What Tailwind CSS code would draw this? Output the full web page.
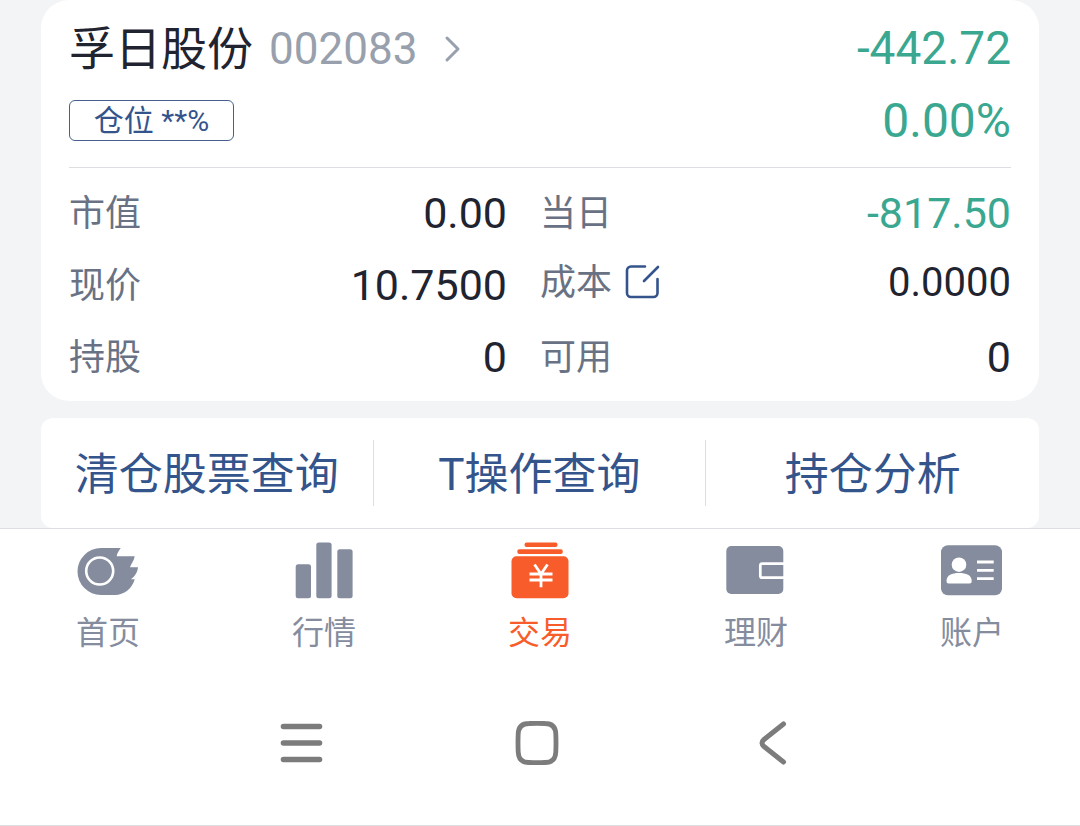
<!DOCTYPE html>
<html lang="zh-CN">
<head>
  <meta charset="UTF-8" />
  <title>持仓</title>
  <meta name="viewport" content="width=device-width, initial-scale=1" />
  <script src="https://cdn.jsdelivr.net/npm/@tailwindcss/browser@4"></script>
</head>
<body class="bg-white font-['Roboto','Noto_Sans_CJK_SC',sans-serif] text-[#1f2430]">

  <main class="bg-[#f3f4f6] px-[41px]">

    <!-- Position card -->
    <section class="bg-white rounded-[28px] px-7 pt-3 pb-2">
      <div class="flex items-center justify-between h-[72px]">
        <a href="#" class="flex items-center pt-0.5">
          <h1 class="text-[46px] leading-none">孚日股份</h1>
          <span class="ml-4 text-[44px] leading-none text-[#989fad]">002083</span>
          <svg class="ml-[22px] w-[24px] h-[32px]" viewBox="0 0 24 32" fill="none" stroke="#989fad" stroke-width="3" stroke-linecap="round" stroke-linejoin="round" aria-hidden="true">
            <path d="M8 5l11 11L8 27" />
          </svg>
        </a>
        <span class="text-[46px] leading-none text-[#3aa790]">-442.72</span>
      </div>
      <div class="flex items-center justify-between h-[72px] mb-[11px]">
        <span class="flex items-center justify-center w-[165px] h-[41px] pt-0.5 border border-[#45608f] rounded-md text-[30px] leading-none text-[#34548c]">仓位 **%</span>
        <span class="pt-0.5 text-[48px] leading-none text-[#3aa790]">0.00%</span>
      </div>

      <dl class="grid grid-cols-2 border-t border-[#dcdee2] pt-[9px] text-[43px] leading-none">
        <div class="flex items-center justify-between h-[72px] pr-[33px]">
          <dt class="pt-0.5 text-[36px] text-[#697284]">市值</dt>
          <dd>0.00</dd>
        </div>
        <div class="flex items-center justify-between h-[72px]">
          <dt class="pt-0.5 text-[36px] text-[#697284]">当日</dt>
          <dd class="text-[#3aa790]">-817.50</dd>
        </div>
        <div class="flex items-center justify-between h-[72px] pr-[33px]">
          <dt class="pt-0.5 text-[36px] text-[#697284]">现价</dt>
          <dd>10.7500</dd>
        </div>
        <div class="flex items-center justify-between h-[72px] pb-1">
          <dt class="flex items-center text-[36px] text-[#697284]">
            成本
            <button type="button" aria-label="修改成本" class="ml-3">
              <svg class="w-[36px] h-[36px]" viewBox="0 0 36 36" fill="none" stroke="#34548c" stroke-width="2.6" stroke-linecap="round" stroke-linejoin="round">
                <path d="M21 1.500H7a4 4 0 0 0-4 4V28a4 4 0 0 0 4 4h22.500a4 4 0 0 0 4-4V14" />
                <path d="M20 16L34 2" />
              </svg>
            </button>
          </dt>
          <dd class="text-[40px]">0.0000</dd>
        </div>
        <div class="flex items-center justify-between h-[72px] pr-[33px]">
          <dt class="pt-0.5 text-[36px] text-[#697284]">持股</dt>
          <dd>0</dd>
        </div>
        <div class="flex items-center justify-between h-[72px]">
          <dt class="pt-0.5 text-[36px] text-[#697284]">可用</dt>
          <dd>0</dd>
        </div>
      </dl>
    </section>

    <!-- Shortcuts -->
    <section class="mt-[17px] grid grid-cols-3 items-center h-[110px] bg-white rounded-xl text-[44px] leading-none text-[#34548c] text-center whitespace-nowrap">
      <a href="#" class="flex items-center justify-center h-[66px] pt-1 border-r border-[#dcdee2]">清仓股票查询</a>
      <a href="#" class="flex items-center justify-center h-[66px] pt-1 border-r border-[#dcdee2]">T操作查询</a>
      <a href="#" class="flex items-center justify-center h-[66px] pt-1">持仓分析</a>
    </section>
  </main>

  <!-- Tab bar -->
  <nav class="grid grid-cols-5 border-t border-[#dcdee2] pt-3 pb-[10px] text-[32px] leading-10 text-[#848c9e]">
    <a href="#" class="flex flex-col items-center gap-3">
      <svg class="w-[64px] h-[60px]" viewBox="0 0 64 60" fill="currentColor" aria-hidden="true">
        <path d="M25 7H44.700C43 10 41 12 40.700 15.300H58.700C58 20 55 23 54 26.300H62C61.500 32 58 36 55 38.300H58.700C56 48 48 54 39 54H25A23.500 23.500 0 0 1 25 7Z" />
        <circle cx="23.700" cy="30" r="13.500" fill="none" stroke="#fff" stroke-width="2.600" />
      </svg>
      首页
    </a>
    <a href="#" class="flex flex-col items-center gap-3">
      <svg class="w-[64px] h-[60px]" viewBox="0 0 64 60" fill="currentColor" aria-hidden="true">
        <rect x="3.700" y="23.300" width="15.300" height="34" rx="2.500" />
        <rect x="24.300" y="1.500" width="15.300" height="55.800" rx="2.500" />
        <rect x="45.300" y="8.300" width="15.300" height="49" rx="2.500" />
      </svg>
      行情
    </a>
    <a href="#" aria-current="page" class="flex flex-col items-center gap-3 text-[#f95c2b]">
      <svg class="w-[64px] h-[60px]" viewBox="0 0 64 60" fill="currentColor" aria-hidden="true">
        <rect x="16.500" y="1.500" width="33" height="4.600" rx="2" />
        <rect x="9.300" y="8.300" width="45.500" height="4.700" rx="2" />
        <rect x="3.500" y="15.300" width="57" height="42" rx="5" />
        <path d="M26.500 23.500L33 33l6.500-9.500M33 33v13.300M21.500 33h23M21.500 39h23" fill="none" stroke="#fff" stroke-width="2.800" />
      </svg>
      交易
    </a>
    <a href="#" class="flex flex-col items-center gap-3">
      <svg class="w-[64px] h-[60px]" viewBox="0 0 64 60" fill="currentColor" aria-hidden="true">
        <rect x="2.300" y="5" width="57" height="48" rx="5" />
        <path d="M60 22.700H38.300a2 2 0 0 0-2 2v10a2 2 0 0 0 2 2H60" fill="none" stroke="#fff" stroke-width="2.700" />
      </svg>
      理财
    </a>
    <a href="#" class="flex flex-col items-center gap-3">
      <svg class="w-[64px] h-[60px]" viewBox="0 0 64 60" fill="currentColor" aria-hidden="true">
        <rect x="1" y="4.300" width="61" height="50" rx="7" />
        <circle cx="19" cy="23.700" r="7.300" fill="#fff" />
        <path d="M6.500 40C6.500 34 12 32 19 32s12.700 2 12.700 8c0 1.700-.700 2.500-2.200 2.500H8.700c-1.500 0-2.200-.800-2.200-2.500Z" fill="#fff" />
        <path d="M37 21h16.700M37 29.300h16.700M37 37.700h16.700" stroke="#fff" stroke-width="2.800" />
      </svg>
      账户
    </a>
  </nav>

  <!-- System navigation -->
  <footer class="flex justify-center gap-[188px] border-b border-[#dcdee2] pt-[58px] pb-[60px] pr-[6px] text-[#7c7c7c]">
    <button type="button" aria-label="最近任务">
      <svg class="w-[48px] h-[44px]" viewBox="0 0 48 44" fill="none" stroke="currentColor" stroke-width="5.600" stroke-linecap="round">
        <path d="M6.500 5.500h36M6.500 22h36M6.500 38.500h36" />
      </svg>
    </button>
    <button type="button" aria-label="主屏幕">
      <svg class="w-[48px] h-[44px]" viewBox="0 0 48 44" fill="none" stroke="currentColor" stroke-width="4.800">
        <path d="M16 2.500Q24 2 32 2.500Q42.500 2.500 42.800 13Q43.200 22 42.800 31Q42.500 41.500 32 41.500Q24 42 16 41.500Q5.500 41.500 5.200 31Q4.800 22 5.200 13Q5.500 2.500 16 2.500Z" />
      </svg>
    </button>
    <button type="button" aria-label="返回">
      <svg class="w-[48px] h-[44px]" viewBox="0 0 48 44" fill="none" stroke="currentColor" stroke-width="5" stroke-linecap="round" stroke-linejoin="round">
        <path d="M34.500 3L15 18.500Q11 22 15 25.500L34.500 41" />
      </svg>
    </button>
  </footer>

</body>
</html>
